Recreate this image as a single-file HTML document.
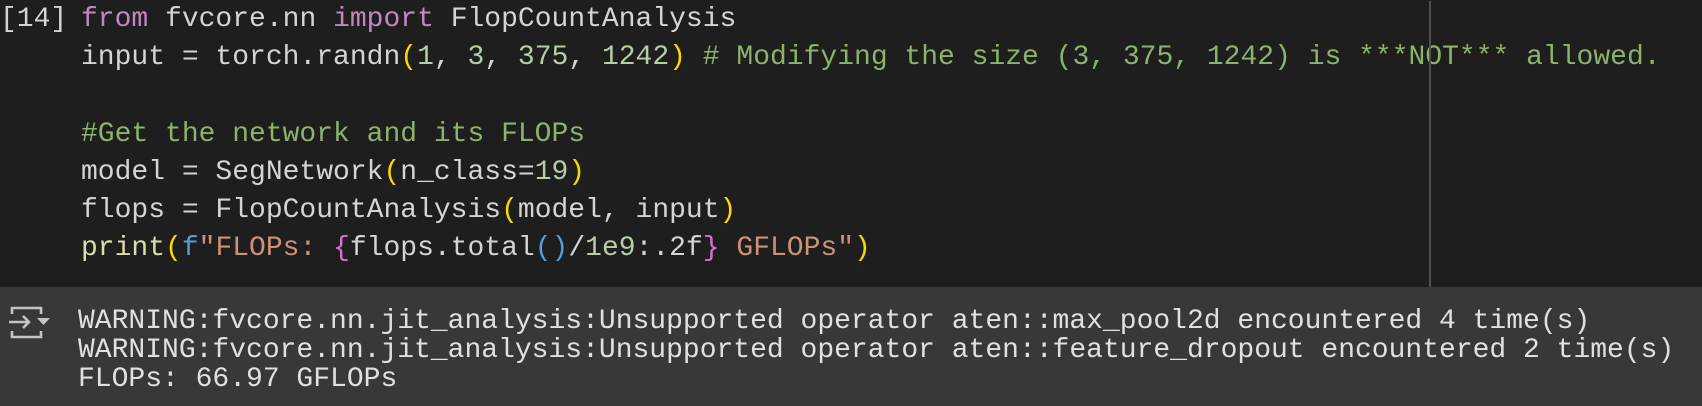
<!DOCTYPE html>
<html><head><style>
body{margin:0;width:1702px;height:406px;background:#1e1e1e;overflow:hidden;font-family:"Liberation Mono","DejaVu Sans Mono",monospace;}
.code{position:absolute;left:0;top:0;width:1702px;height:287px;background:#1e1e1e;}
.out{position:absolute;left:0;top:287px;width:1702px;height:119px;background:#383838;}
pre{margin:0;font-family:inherit;white-space:pre;color:#d4d4d4;}
.c pre{position:absolute;left:81px;top:1px;font-size:28px;line-height:38.2px;}
.o pre{position:absolute;left:78px;top:307px;font-size:28px;line-height:29.2px;color:#e0e0e0;}
.n{position:absolute;left:0;top:1px;font-size:28px;line-height:38.2px;color:#d4d4d4;}
.k{color:#c586c0}.g{color:#8bb36b}.m{color:#b5cea8}.y{color:#ffd700}.s{color:#ce9178}.p{color:#da70d6}.f{color:#dcdcaa}.b{color:#569cd6}
.vl{position:absolute;left:1429px;top:1px;width:2px;height:286px;background:#4f4f4f;}
</style></head><body>
<div class="code c">
<div class="n">[14]</div>
<pre><span class="k">from</span> fvcore.nn <span class="k">import</span> FlopCountAnalysis
input = torch.randn<span class="y">(</span><span class="m">1</span>, <span class="m">3</span>, <span class="m">375</span>, <span class="m">1242</span><span class="y">)</span> <span class="g"># Modifying the size (3, 375, 1242) is ***NOT*** allowed.</span>

<span class="g">#Get the network and its FLOPs</span>
model = SegNetwork<span class="y">(</span>n_class=<span class="m">19</span><span class="y">)</span>
flops = FlopCountAnalysis<span class="y">(</span>model, input<span class="y">)</span>
<span class="f">print</span><span class="y">(</span><span class="b">f</span><span class="s">"FLOPs: </span><span class="p">{</span>flops.total<span class="b">()</span>/<span class="m">1e9</span>:.2f<span class="p">}</span><span class="s"> GFLOPs"</span><span class="y">)</span></pre>
<div class="vl"></div>
</div>
<div class="out"></div>
<svg style="position:absolute;left:8px;top:304px" width="44" height="36" viewBox="0 0 44 36" fill="none" stroke="#c4c4c4" stroke-width="2.6">
<path d="M4 10V4h29v6"/><path d="M4 27v6h29v-6"/><path d="M1 18h20M15 12l6 6-6 6"/>
<path d="M29 14h13l-6.5 7z" fill="#c4c4c4" stroke="none"/>
</svg>
<div class="o"><pre>WARNING:fvcore.nn.jit_analysis:Unsupported operator aten::max_pool2d encountered 4 time(s)
WARNING:fvcore.nn.jit_analysis:Unsupported operator aten::feature_dropout encountered 2 time(s)
FLOPs: 66.97 GFLOPs</pre></div>
</body></html>
